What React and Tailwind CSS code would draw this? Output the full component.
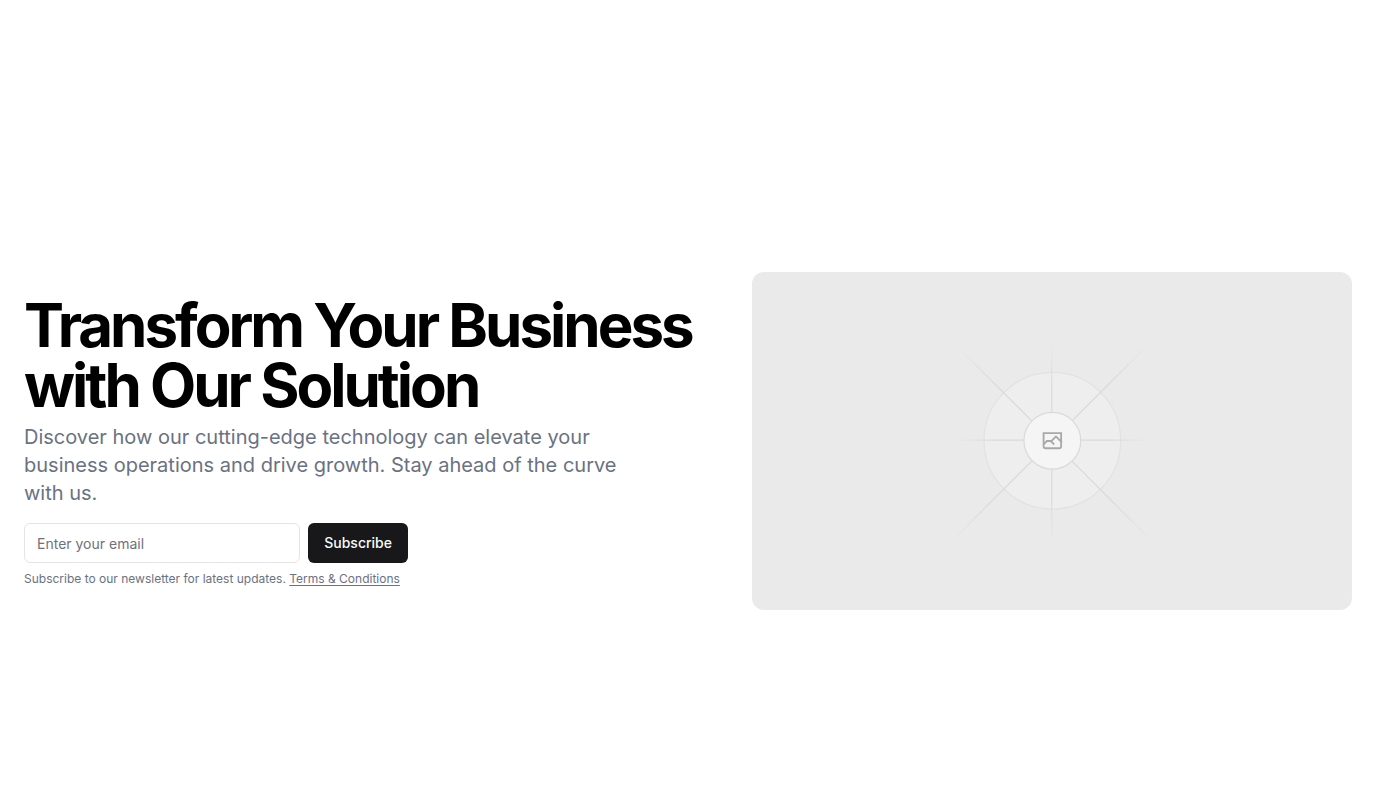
import React from "react";

function FadeStops() {
  return (
    <>
      <stop stopColor="#C9C9C9" stopOpacity="0" />
      <stop offset=".208" stopColor="#C9C9C9" />
      <stop offset=".792" stopColor="#C9C9C9" />
      <stop offset="1" stopColor="#C9C9C9" stopOpacity="0" />
    </>
  );
}

function Placeholder() {
  return (
    <svg
      viewBox="0 0 1200 1200"
      preserveAspectRatio="xMidYMid slice"
      fill="none"
      role="img"
      aria-label="Hero"
      className="block aspect-video w-full rounded-xl bg-[#eaeaea]"
    >
      <defs>
        <linearGradient id="rise" x1="404" y1="796" x2="796" y2="404" gradientUnits="userSpaceOnUse">
          <FadeStops />
        </linearGradient>
        <linearGradient id="flat" x1="796.912" y1="599.963" x2="404.507" y2="599.965" gradientUnits="userSpaceOnUse">
          <FadeStops />
        </linearGradient>
        <linearGradient id="tall" x1="600.792" y1="403.677" x2="600.794" y2="796.082" gradientUnits="userSpaceOnUse">
          <FadeStops />
        </linearGradient>
        <linearGradient id="fall" x1="404.85" y1="403.903" x2="796.972" y2="796.02" gradientUnits="userSpaceOnUse">
          <FadeStops />
        </linearGradient>
      </defs>
      <g opacity=".5">
        <g opacity=".5">
          <circle cx="600.709" cy="599.88" r="136.62" fill="#FAFAFA" />
          <circle cx="600.709" cy="599.88" r="136.62" stroke="#C9C9C9" strokeWidth="2.418" />
        </g>
        <path stroke="url(#rise)" strokeWidth="2.418" d="M404.4 795.9 795.8 404.5" />
        <path stroke="url(#flat)" strokeWidth="2.418" d="M404.846 598.671h391.726" />
        <path stroke="url(#tall)" strokeWidth="2.418" d="M599.5 795.742V404.017" />
        <path stroke="url(#fall)" strokeWidth="2.418" d="m795.717 796.597-391.441-391.44" />
        <circle cx="600.709" cy="599.88" r="56.825" fill="#fff" />
        <path
          fill="#666"
          fillRule="evenodd"
          clipRule="evenodd"
          d="M616.426 586.58h-31.434v16.176l3.553-3.554.531-.531h9.068l.074-.074 8.463-8.463h2.565l7.18 7.181V586.58Zm-15.715 14.654 3.698 3.699 1.283 1.282-2.565 2.565-1.282-1.283-5.2-5.199h-6.066l-5.514 5.514-.073.073v2.876a2.418 2.418 0 0 0 2.418 2.418h26.598a2.418 2.418 0 0 0 2.418-2.418v-8.317l-8.463-8.463-7.181 7.181-.071.072Zm-19.347 5.442v4.085a6.045 6.045 0 0 0 6.046 6.045h26.598a6.044 6.044 0 0 0 6.045-6.045v-7.108l1.356-1.355-1.282-1.283-.074-.073v-17.989h-38.689v23.43l-.146.146.146.147Z"
        />
        <circle cx="600.709" cy="599.88" r="56.825" stroke="#C9C9C9" strokeWidth="2.418" />
      </g>
    </svg>
  );
}

export default function App() {
  return (
    <main className="flex min-h-screen items-center bg-white px-6 pt-20 font-[Inter,sans-serif] text-black [font-optical-sizing:none]">
      <section className="grid w-full items-center gap-12 lg:grid-cols-[minmax(0,1fr)_400px] xl:grid-cols-[minmax(0,1fr)_600px]">
        <div className="flex flex-col gap-4">
          <div className="flex flex-col gap-2">
            <h1 className="text-6xl/[60px] font-bold tracking-tighter">
              Transform Your Business with Our Solution
            </h1>
            <p className="max-w-[600px] text-xl text-gray-500">
              Discover how our cutting-edge technology can elevate your business
              operations and drive growth. Stay ahead of the curve with us.
            </p>
          </div>
          <div className="flex flex-col gap-2">
            <form
              className="flex max-w-sm gap-2"
              onSubmit={(event) => event.preventDefault()}
            >
              <input
                type="email"
                aria-label="Email"
                placeholder="Enter your email"
                className="h-10 min-w-0 flex-1 rounded-md border border-zinc-200 bg-white px-3 py-2 text-sm placeholder:text-zinc-500"
              />
              <button
                type="submit"
                className="h-10 rounded-md bg-zinc-900 px-4 text-sm font-medium text-zinc-50"
              >
                Subscribe
              </button>
            </form>
            <p className="text-xs text-gray-500">
              Subscribe to our newsletter for latest updates.{" "}
              <a href="#terms" className="underline underline-offset-2">
                Terms &amp; Conditions
              </a>
            </p>
          </div>
        </div>
        <Placeholder />
      </section>
    </main>
  );
}
